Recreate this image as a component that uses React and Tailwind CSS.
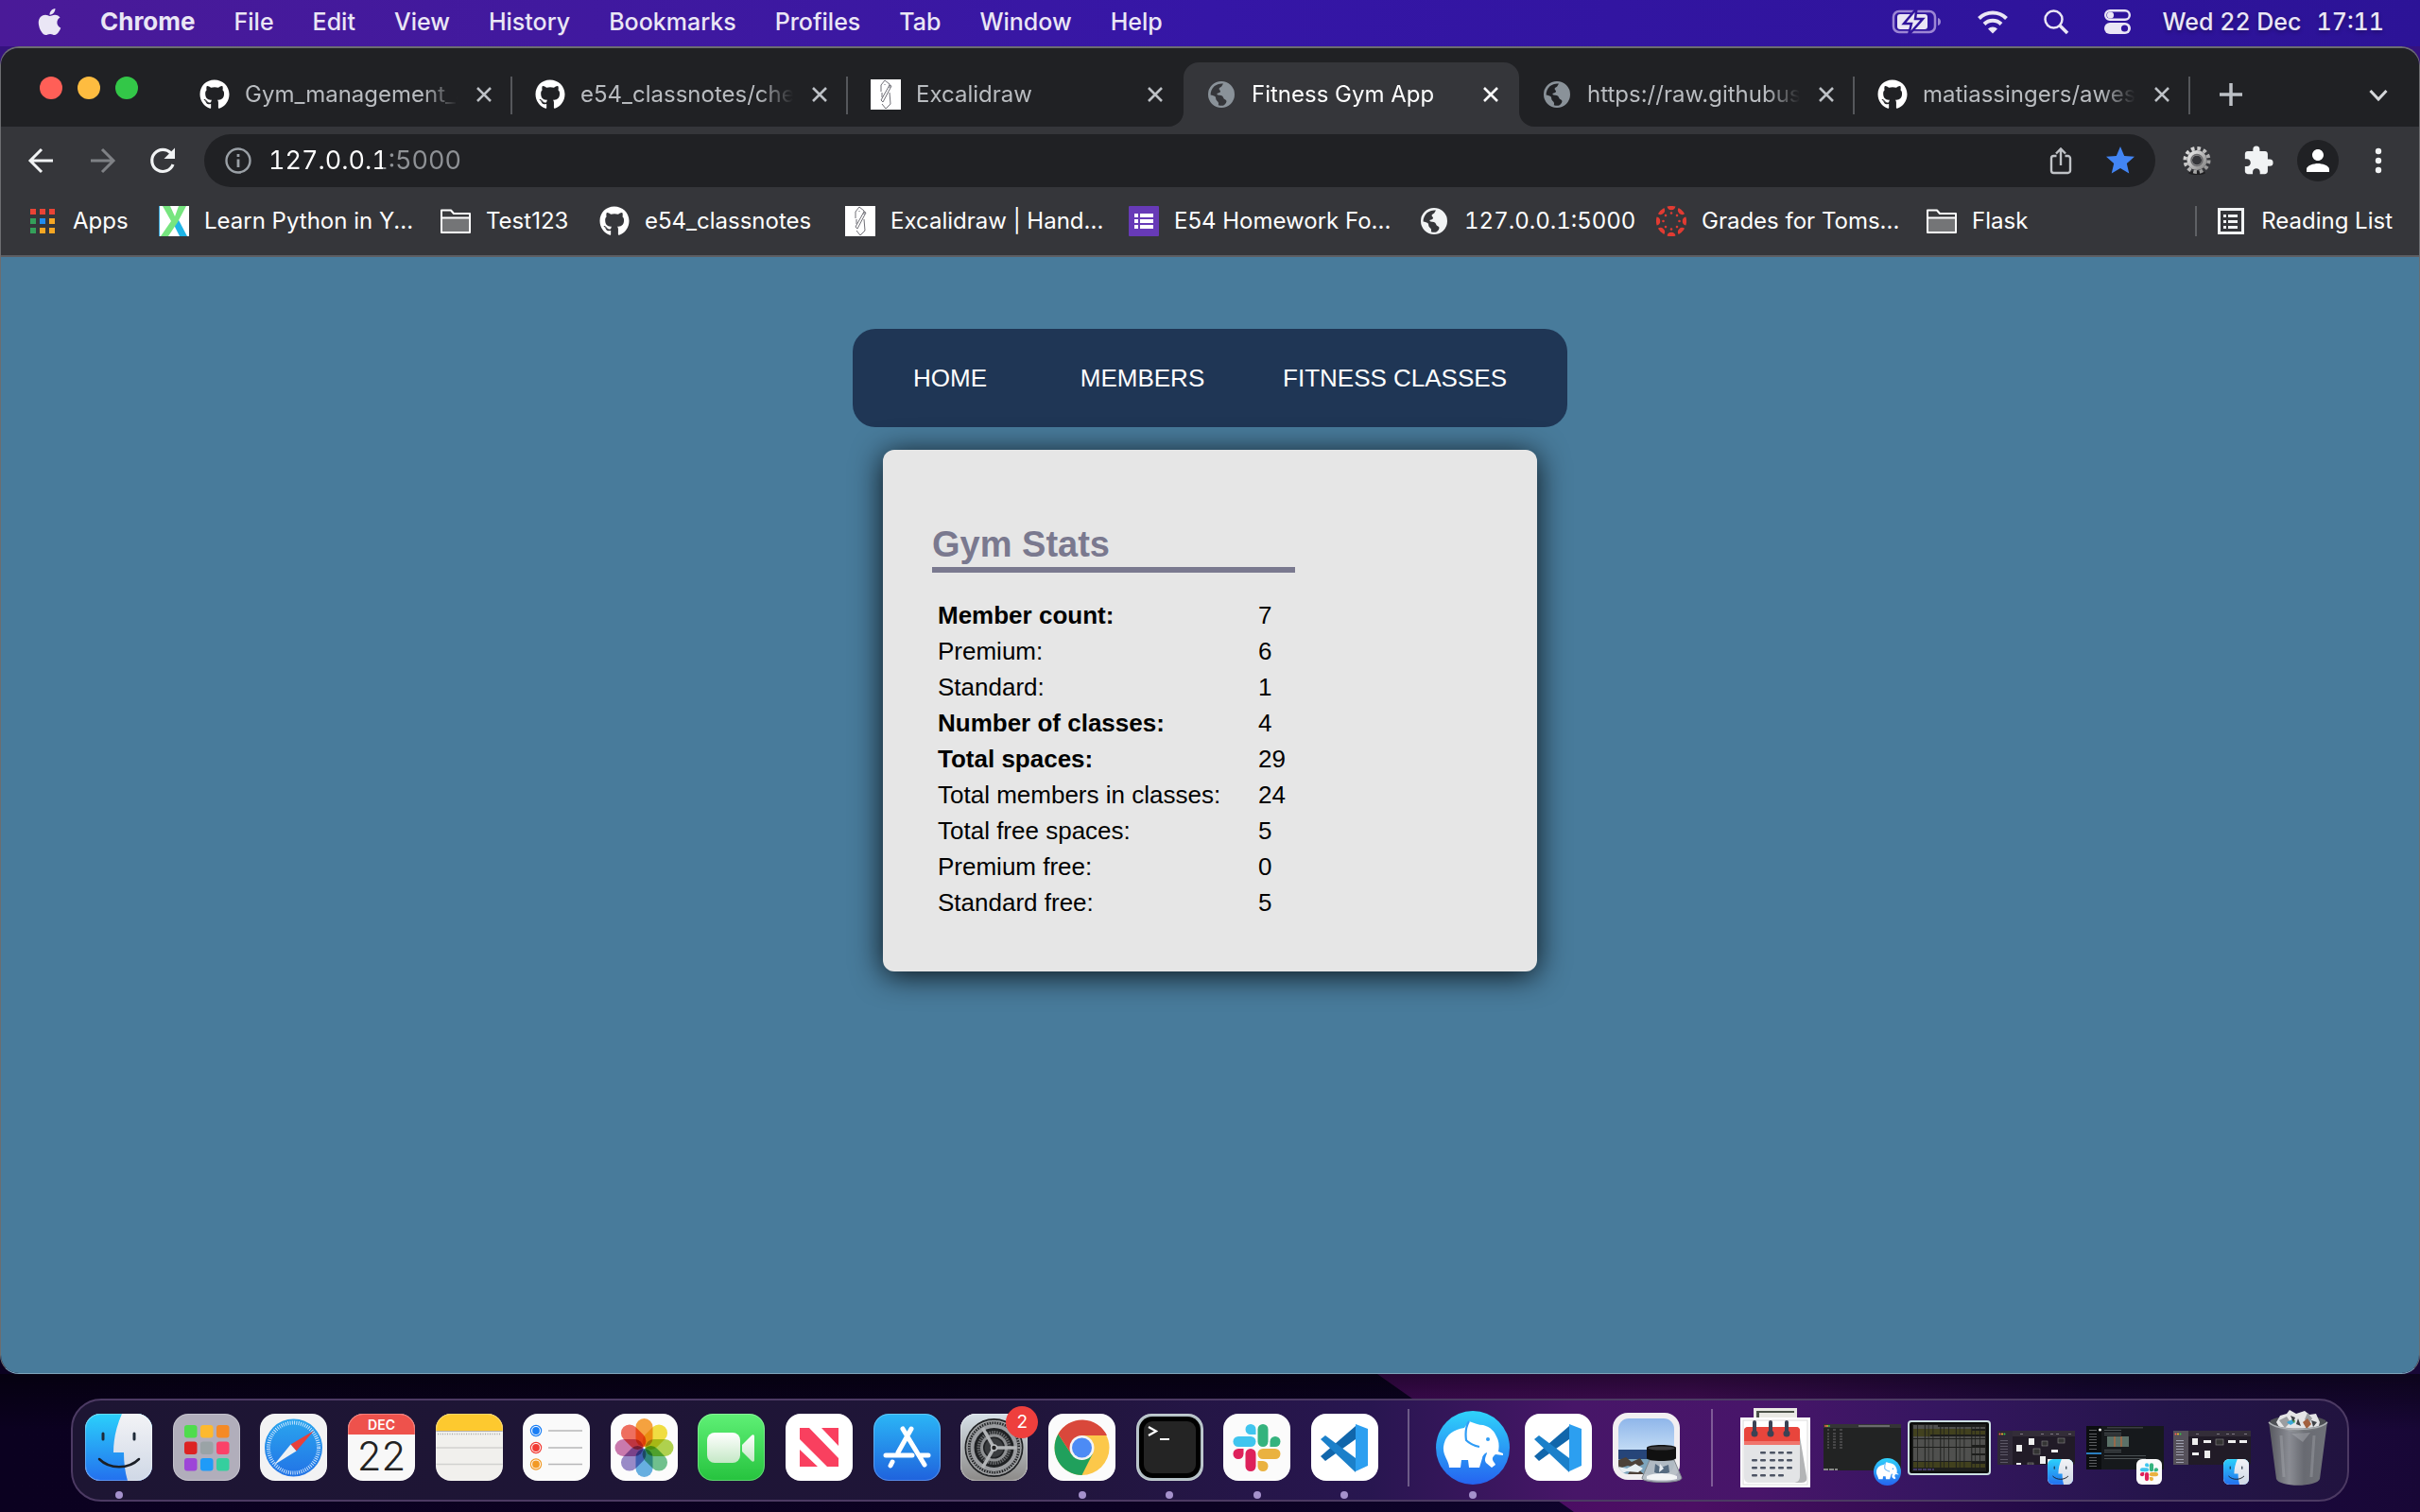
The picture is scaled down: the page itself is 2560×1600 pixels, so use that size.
import React from "react";
import { FaApple, FaGithub } from "react-icons/fa";
import { MdStar, MdExtension, MdPerson } from "react-icons/md";

const INTER = "font-['Inter','Noto_Sans',sans-serif]";
const ARIAL = "font-['Liberation_Sans',Arial,sans-serif]";

/* ---------- small glyphs ---------- */

function Globe({ className }) {
  return (
    <svg viewBox="0 0 32 32" className={"w-8 h-8 shrink-0 " + className} aria-hidden="true">
      <path
        fill="currentColor"
        fillRule="evenodd"
        d="M16 2a14 14 0 1 0 0 28a14 14 0 0 0 0-28zM18 4.6c-1 1.200-1 2.600-2.400 3.400c-2.200 1-2.600 2-1.200 3.600c1.400 1.400.2 2.600-1.600 2.800c-1.800.2-1.800 1.600-.4 2c2.400.2 5 .4 5.600 2.600c.4 2.200 2.200 2 3.200 3.200c.8 1.600-.4 3.600-2.800 5.400a11.600 11.600 0 0 1-5.600-.4c.6-2 .2-3.200-1.400-4.400c-1.400-1-1-2.800-1.600-4.200c-1-1.600-3.400-1.800-5.200-2.200A11.600 11.600 0 0 1 18 4.600z"
      />
    </svg>
  );
}

function PencilMark() {
  return (
    <svg viewBox="0 0 32 32" className="w-8 h-8 shrink-0" aria-hidden="true">
      <rect width="32" height="32" fill="#fff" />
      <g fill="none" stroke="#6f6f76" strokeWidth="1" strokeLinejoin="round">
        <path d="M11 13V6l4-5 5 4v4" />
        <path d="M20 6l2 1-9 17-2-2z" />
        <path d="M12 14v5M20 14l1 12-5 5-4-5M15 5v1" />
      </g>
    </svg>
  );
}

function AppsGrid() {
  const c = ["#ea4335", "#ea4335", "#ea4335", "#34a05a", "#1f8cf0", "#f5a623", "#34a05a", "#f5a623", "#f5a623"];
  return (
    <svg viewBox="0 0 32 32" className="w-8 h-8 shrink-0" aria-hidden="true">
      {c.map((f, i) => (
        <rect key={i} x={3 + (i % 3) * 10} y={3 + Math.floor(i / 3) * 10} width="6" height="6" fill={f} />
      ))}
    </svg>
  );
}

function LearnX() {
  return (
    <svg viewBox="0 0 32 32" className="w-8 h-8 shrink-0" aria-hidden="true">
      <rect width="32" height="32" fill="#fff" />
      <path d="M0 0h1v32H0z" fill="#3aa7d8" />
      <path d="M14 16l6-3 10 19h-8z" fill="#1eb4e6" />
      <path d="M4 0h8l5 11L21 0h8L20 17 10 32H2l11-16z" fill="#77e57f" />
    </svg>
  );
}

function Folder() {
  return (
    <svg viewBox="0 0 32 32" className="w-8 h-8 shrink-0" aria-hidden="true">
      <path d="M1 28V4.500h10l3 3.500h17v20z" fill="#3a3b3e" stroke="#fff" strokeWidth="2" strokeLinejoin="round" />
      <path d="M2 13h28v14H2z" fill="#747577" />
      <path d="M1 12.500h30" stroke="#fff" strokeWidth="2" />
    </svg>
  );
}

function FormsIcon() {
  return (
    <svg viewBox="0 0 32 32" className="w-8 h-8 shrink-0" aria-hidden="true">
      <rect width="32" height="32" rx="1" fill="#673ab7" />
      {[8, 14, 20].map((y) => (
        <g key={y} fill="#fff">
          <rect x="6" y={y} width="4" height="4" />
          <rect x="12" y={y} width="14" height="4" />
        </g>
      ))}
    </svg>
  );
}

function CanvasIcon() {
  const a = [0, 45, 90, 135, 180, 225, 270, 315];
  return (
    <svg viewBox="0 0 32 32" className="w-8 h-8 shrink-0" aria-hidden="true">
      {a.map((r) => (
        <g key={r} transform={`rotate(${r} 16 16)`} fill="#e13b32">
          <path d="M11.500 .6a16 16 0 0 1 9 0a4.600 4.600 0 0 1-9 0z" />
          <circle cx="16" cy="7.500" r="1.300" />
        </g>
      ))}
    </svg>
  );
}

function ReadingIcon() {
  return (
    <svg viewBox="0 0 32 32" className="w-8 h-8 shrink-0" aria-hidden="true">
      <rect x="3.500" y="3.500" width="25" height="25" fill="none" stroke="#f1f3f4" strokeWidth="3" />
      {[9, 15, 21].map((y) => (
        <g key={y} fill="#f1f3f4">
          <rect x="8" y={y} width="3" height="3" />
          <rect x="13" y={y} width="10" height="3" />
        </g>
      ))}
    </svg>
  );
}

function Close({ active }) {
  return (
    <svg viewBox="0 0 16 16" className={active ? "w-4 h-4 text-white" : "w-4 h-4 text-[#bdc1c6]"} aria-hidden="true">
      <path d="M1 1l14 14M15 1L1 15" stroke="currentColor" strokeWidth="2.600" fill="none" />
    </svg>
  );
}

/* ---------- menu bar ---------- */

function MenuBar() {
  const items = ["File", "Edit", "View", "History", "Bookmarks", "Profiles", "Tab", "Window", "Help"];
  return (
    <header
      className={
        "relative flex h-[49px] items-center bg-linear-to-r from-[#4a1a98] via-[#3516a6] to-[#2c1397] pb-[3px] pl-[38px] pr-[38px] text-[25px] font-medium leading-8 text-[#eae6f5] [text-shadow:0_2px_4px_rgba(0,0,0,0.3)] " +
        INTER
      }
    >
      <button aria-label="Apple menu" className="mr-[39px]">
        <FaApple className="h-8 w-[29px]" />
      </button>
      <nav className="flex gap-[41px]">
        <button className="text-[26px] font-bold">Chrome</button>
        {items.map((t) => (
          <button key={t}>{t}</button>
        ))}
      </nav>
      <div className="ml-auto flex items-center">
        <svg viewBox="0 0 54 28" className="mr-9 h-7 w-[54px]" aria-label="Battery charging">
          <rect x="2" y="3" width="44" height="22" rx="6" fill="none" stroke="#9c86d4" strokeWidth="2.500" />
          <path d="M49 10c4 1 4 7 0 8z" fill="#9c86d4" />
          <rect x="6" y="6" width="32" height="16" rx="3" fill="#eae6f5" />
          <path d="M26.500 0L13 16h8l-3 12L33 11h-8z" fill="#eae6f5" stroke="#30149c" strokeWidth="2.500" />
        </svg>
        <svg viewBox="0 0 34 26" className="mr-9 h-[26px] w-[34px]" aria-label="Wi-Fi">
          <g fill="none" stroke="#eae6f5" strokeWidth="4">
            <path d="M2.500 9.500a20.500 20.500 0 0 1 29 0" />
            <path d="M8 15.500a12.800 12.800 0 0 1 18 0" />
          </g>
          <path d="M17 25.500l-5-5a7 7 0 0 1 10 0z" fill="#eae6f5" />
        </svg>
        <svg viewBox="0 0 28 28" className="mr-9 h-7 w-7" aria-label="Search">
          <circle cx="11.500" cy="11.500" r="9" fill="none" stroke="#eae6f5" strokeWidth="2.500" />
          <path d="M18 18l8 8" stroke="#eae6f5" strokeWidth="3.500" />
        </svg>
        <svg viewBox="0 0 30 28" className="mr-[33px] h-7 w-[30px]" aria-label="Control Centre">
          <rect x="2.200" y="2.200" width="25.600" height="9.600" rx="4.800" fill="none" stroke="#eae6f5" strokeWidth="2.400" />
          <circle cx="7.500" cy="7" r="3.600" fill="#eae6f5" />
          <rect x="1" y="15" width="28" height="12" rx="6" fill="#eae6f5" />
          <circle cx="22.500" cy="21" r="3.600" fill="#30149c" />
        </svg>
        <time className="flex gap-4 tabular-nums">
          <span>Wed 22 Dec</span>
          <span>17:11</span>
        </time>
      </div>
    </header>
  );
}

/* ---------- browser chrome ---------- */

const tabs = [
  { title: "Gym_management_app", icon: "gh", sep: true },
  { title: "e54_classnotes/checkin", icon: "gh", sep: true },
  { title: "Excalidraw", icon: "pencil" },
  { title: "Fitness Gym App", icon: "globe", active: true },
  { title: "https://raw.githubusercontent", icon: "globe", sep: true },
  { title: "matiassingers/awesome", icon: "gh", sep: true },
];

function Tab({ title, icon, active, sep }) {
  return (
    <div
      role="tab"
      aria-selected={!!active}
      className={
        "relative flex h-[68px] w-[355px] items-center pl-6 pr-[22px] " +
        (active ? "rounded-t-2xl bg-[#35363a] text-white" : "text-[#b9bcc0]")
      }
    >
      {active && (
        <>
          <svg viewBox="0 0 16 16" className="absolute -left-4 bottom-0 h-4 w-4" aria-hidden="true">
            <path d="M16 0v16H0A16 16 0 0 0 16 0z" fill="#35363a" />
          </svg>
          <svg viewBox="0 0 16 16" className="absolute -right-4 bottom-0 h-4 w-4" aria-hidden="true">
            <path d="M0 0v16h16A16 16 0 0 1 0 0z" fill="#35363a" />
          </svg>
        </>
      )}
      {icon === "gh" && <FaGithub className="h-8 w-8 shrink-0 text-white" />}
      {icon === "pencil" && <PencilMark />}
      {icon === "globe" && <Globe className="text-[#8a9299]" />}
      <button className="ml-4 mr-5 min-w-0 flex-1 overflow-hidden whitespace-nowrap text-left [mask-image:linear-gradient(to_right,black_84%,transparent_100%)]">
        {title}
      </button>
      <button aria-label={"Close " + title}>
        <Close active={active} />
      </button>
      {sep && <span className="absolute right-0 top-[15px] h-10 w-0.5 bg-[#55575b]" />}
    </div>
  );
}

function TabStrip() {
  return (
    <div className="flex h-[83px] items-end bg-[#202124] pl-[41px]">
      <div className="flex h-full items-center gap-4">
        <button aria-label="Close window" className="h-6 w-6 rounded-full bg-[#ff5f57]" />
        <button aria-label="Minimise window" className="h-6 w-6 rounded-full bg-[#febc40]" />
        <button aria-label="Zoom window" className="h-6 w-6 rounded-full bg-[#33c748]" />
      </div>
      <div role="tablist" className="ml-[41px] flex">
        {tabs.map((t) => (
          <Tab key={t.title} {...t} />
        ))}
      </div>
      <button aria-label="New tab" className="mb-[22px] ml-[31px]">
        <svg viewBox="0 0 24 24" className="h-6 w-6">
          <path d="M12 0v24M0 12h24" stroke="#bdc1c6" strokeWidth="3.500" />
        </svg>
      </button>
      <button aria-label="Search tabs" className="mb-[26px] ml-auto mr-[33px]">
        <svg viewBox="0 0 20 14" className="h-3.5 w-5">
          <path d="M1.500 2L10 11l8.500-9" stroke="#d5d7da" strokeWidth="3" fill="none" />
        </svg>
      </button>
    </div>
  );
}

function Toolbar() {
  return (
    <div className="flex items-center bg-[#35363a] pl-[27px] pr-[27px] pt-2">
      <button aria-label="Back" className="mr-8">
        <svg viewBox="0 0 32 32" className="h-8 w-8">
          <path d="M28 16H5M16 4L4 16l12 12" stroke="#f1f3f4" strokeWidth="3" fill="none" />
        </svg>
      </button>
      <button aria-label="Forward" className="mr-8">
        <svg viewBox="0 0 32 32" className="h-8 w-8">
          <path d="M4 16h23M16 4l12 12-12 12" stroke="#7f8185" strokeWidth="3" fill="none" />
        </svg>
      </button>
      <button aria-label="Reload">
        <svg viewBox="0 0 32 32" className="h-8 w-8">
          <path d="M25 8.500A11.500 11.500 0 1 0 27 20" stroke="#f1f3f4" strokeWidth="3.200" fill="none" />
          <path d="M29 2.500V14H17.500z" fill="#f1f3f4" />
        </svg>
      </button>
      <div className="ml-7 flex h-14 flex-1 items-center rounded-full bg-[#202124] pl-5 pr-[19px]">
        <svg viewBox="0 0 32 32" className="h-8 w-8 shrink-0" aria-hidden="true">
          <circle cx="16" cy="16" r="12.500" fill="none" stroke="#9aa0a6" strokeWidth="2.400" />
          <path d="M16 14.500V23M16 9v3" stroke="#9aa0a6" strokeWidth="2.800" />
        </svg>
        <input
          aria-label="Address"
          defaultValue="127.0.0.1:5000"
          className="ml-4 min-w-0 flex-1 bg-[linear-gradient(to_right,#fff_121px,#8f9296_121px)] bg-clip-text text-[27px] leading-9 text-transparent tabular-nums outline-none"
        />
        <button aria-label="Share" className="mr-[29px]">
          <svg viewBox="0 0 32 32" className="h-8 w-8">
            <path
              d="M11.500 11H8.500a2.500 2.500 0 0 0-2.500 2.500v13A2.500 2.500 0 0 0 8.500 29h15a2.500 2.500 0 0 0 2.500-2.500v-13a2.500 2.500 0 0 0-2.500-2.500h-3M16 21V3.500M11 8.500l5-5 5 5"
              stroke="#bfc2c6"
              strokeWidth="2.400"
              fill="none"
            />
          </svg>
        </button>
        <button aria-label="Bookmark this tab">
          <MdStar className="h-9 w-9 text-[#4285f4]" />
        </button>
      </div>
      <button aria-label="Extension settings" className="ml-7 mr-8">
        <svg viewBox="0 0 32 32" className="h-8 w-8">
          <defs>
            <linearGradient id="cog" x1="0" x2="1" y1="0" y2="1">
              <stop offset="0" stopColor="#e4e4e4" />
              <stop offset="1" stopColor="#8b8b8b" />
            </linearGradient>
          </defs>
          <ellipse cx="16" cy="29" rx="9" ry="2" fill="#1e1e20" />
          <circle cx="16" cy="15.500" r="12.500" fill="none" stroke="url(#cog)" strokeWidth="4" strokeDasharray="3.600 2.945" />
          <circle cx="16" cy="15.500" r="7.800" fill="none" stroke="url(#cog)" strokeWidth="5.500" />
          <circle cx="16" cy="15.500" r="6" fill="none" stroke="#6b6b6d" strokeWidth="1.600" />
        </svg>
      </button>
      <button aria-label="Extensions" className="mr-6">
        <MdExtension className="h-[34px] w-[34px] text-[#f1f3f4]" />
      </button>
      <button aria-label="Profile" className="flex h-11 w-11 items-center justify-center rounded-full bg-[#202124]">
        <MdPerson className="h-9 w-9 text-white" />
      </button>
      <button aria-label="Menu" className="ml-[26px]">
        <svg viewBox="0 0 32 32" className="h-8 w-8">
          {[6, 16, 26].map((y) => (
            <circle key={y} cx="16" cy={y} r="3.200" fill="#f1f3f4" />
          ))}
        </svg>
      </button>
    </div>
  );
}

function Bookmark({ icon, children, className = "" }) {
  return (
    <a href="#" className={"flex shrink-0 items-center gap-4 whitespace-nowrap " + className}>
      {icon}
      {children}
    </a>
  );
}

function BookmarksBar() {
  return (
    <div className="flex h-[74px] items-center border-b-2 border-[#5d5e62] bg-[#35363a] pl-7 pr-7 text-white">
      <Bookmark className="w-[139px]" icon={<AppsGrid />}>Apps</Bookmark>
      <Bookmark className="w-[298px]" icon={<LearnX />}>Learn Python in Y...</Bookmark>
      <Bookmark className="w-[168px]" icon={<Folder />}>Test123</Bookmark>
      <Bookmark className="w-[260px]" icon={<FaGithub className="h-8 w-8" />}>e54_classnotes</Bookmark>
      <Bookmark className="w-[300px]" icon={<PencilMark />}>Excalidraw | Hand...</Bookmark>
      <Bookmark className="w-[307px]" icon={<FormsIcon />}>E54 Homework Fo...</Bookmark>
      <Bookmark className="w-[251px] tabular-nums" icon={<Globe className="text-[#f1f3f4]" />}>127.0.0.1:5000</Bookmark>
      <Bookmark className="w-[286px]" icon={<CanvasIcon />}>Grades for Toms...</Bookmark>
      <Bookmark icon={<Folder />}>Flask</Bookmark>
      <span className="ml-auto mr-5 h-8 w-0.5 bg-[#5f6165]" />
      <Bookmark icon={<ReadingIcon />}>Reading List</Bookmark>
    </div>
  );
}

/* ---------- page ---------- */

const stats = [
  ["Member count:", 7, true],
  ["Premium:", 6],
  ["Standard:", 1],
  ["Number of classes:", 4, true],
  ["Total spaces:", 29, true],
  ["Total members in classes:", 24],
  ["Total free spaces:", 5],
  ["Premium free:", 0],
  ["Standard free:", 5],
];

function Page() {
  return (
    <main className={"flex-1 bg-[#487b9b] pt-[76px] text-[26px] " + ARIAL}>
      <nav className="mx-auto flex h-[104px] w-[756px] items-center justify-between rounded-3xl bg-[#1f3655] px-16 text-white">
        <a href="#">HOME</a>
        <a href="#" className="ml-4">MEMBERS</a>
        <a href="#">FITNESS CLASSES</a>
      </nav>
      <section className="mx-auto mt-6 h-[552px] w-[692px] rounded-xl bg-[#e6e6e6] px-[52px] pt-[76px] text-black shadow-[0_4px_32px_rgba(0,0,0,0.85)]">
        <h1 className="w-96 border-b-[6px] border-[#7a798f] text-[38px] font-bold leading-[48px] text-[#7a798f]">Gym Stats</h1>
        <table className="mt-[26px] leading-[38px]">
          <tbody>
            {stats.map(([label, value, bold]) => (
              <tr key={label}>
                <th scope="row" className={"w-[345px] py-0 pl-1.5 text-left " + (bold ? "font-bold" : "font-normal")}>
                  {label}
                </th>
                <td className="p-0">{value}</td>
              </tr>
            ))}
          </tbody>
        </table>
      </section>
    </main>
  );
}

/* ---------- dock artwork ---------- */

function Tile({ children, fill = "#fff", name }) {
  return (
    <svg viewBox="0 0 71 71" className="h-[71px] w-[71px]" aria-hidden="true">
      <defs>
        <clipPath id={"clip-" + name}>
          <rect width="71" height="71" rx="16" />
        </clipPath>
      </defs>
      <g clipPath={`url(#clip-${name})`}>
        <rect width="71" height="71" fill={fill} />
        {children}
      </g>
      <rect x=".5" y=".5" width="70" height="70" rx="15.500" fill="none" stroke="#fff" strokeOpacity=".25" />
    </svg>
  );
}

function Grad({ id, a, b }) {
  return (
    <linearGradient id={id} x1="0" x2="0" y1="0" y2="1">
      <stop offset="0" stopColor={a} />
      <stop offset="1" stopColor={b} />
    </linearGradient>
  );
}

function FinderArt() {
  return (
    <>
      <defs>
        <Grad id="fb" a="#2bd0fb" b="#2370ee" />
        <Grad id="fw" a="#f3f3f6" b="#cfd8e6" />
      </defs>
      <rect width="71" height="71" fill="url(#fb)" />
      <path d="M39 0C33 14 30 27 30 41h11c0 10 1 20 4 30h26V0z" fill="url(#fw)" />
      <path d="M19 21v6M52 21v6" stroke="#1e2a38" strokeWidth="3" strokeLinecap="round" />
      <path d="M15 48c11 11 31 11 42 0" stroke="#1b1f26" strokeWidth="2.500" fill="none" strokeLinecap="round" />
    </>
  );
}

function SlackArt() {
  return (
    <g>
      <g fill="#40c5ef">
        <path d="M29 22V16.500a5.500 5.500 0 1 0-5.500 5.500z" />
        <rect x="5" y="24" width="24" height="11" rx="5.500" />
      </g>
      <g fill="#35b37e">
        <rect x="31" y="11" width="11" height="24" rx="5.500" />
        <path d="M44 35h5.500a5.500 5.500 0 1 0-5.500-5.500z" />
      </g>
      <g fill="#eab240">
        <rect x="31" y="37" width="24" height="11" rx="5.500" />
        <path d="M31 50v5.500a5.500 5.500 0 1 0 5.500-5.500z" />
      </g>
      <g fill="#de215b">
        <path d="M16 37h-5.500a5.500 5.500 0 1 0 5.500 5.500z" />
        <rect x="18" y="37" width="11" height="24" rx="5.500" />
      </g>
    </g>
  );
}

function SlackTile({ name }) {
  return (
    <Tile name={name} fill="#fbfbfb">
      <g transform="translate(5.500 0)">
        <SlackArt />
      </g>
    </Tile>
  );
}

function CodeTile({ name }) {
  return (
    <Tile name={name}>
      <path d="M47 13L10 45l5 5 32-23z" fill="#1166ab" />
      <path d="M10 27l5-4 32 24v15z" fill="#1b80ca" />
      <path d="M47 11l13 5v39l-13 6z" fill="#2c9ff0" />
    </Tile>
  );
}

function ElephantArt() {
  return (
    <>
      <defs>
        <Grad id="el" a="#2fd3fb" b="#2563f0" />
      </defs>
      <circle cx="39" cy="39" r="39" fill="url(#el)" />
      <path
        d="M35 11c6 2 10 4 15 4c8 2 12 7 14 12c3 5 3 11 2 16l5 2v2l-8-1c-4 3-4 6-1 9l1 2-4 3-6-5c-3-4 1-8 1-11c-3 1-5 4-5 6l-3 10H35l-1-8h-7l-1 8H14C14 53 7 47 8 38c1-10 8-18 22-20z"
        fill="#fff"
      />
      <path d="M35 11c-3 5-4 13-3 20c3 3 9 6 14 7" stroke="#2f9cf6" strokeWidth="2.200" fill="none" />
      <circle cx="55" cy="30" r="2" fill="#2f9cf6" />
    </>
  );
}

function ChromeArt() {
  return (
    <g transform="translate(35.500 36)">
      <circle r="29" fill="#fcc84a" />
      <path d="M-25.100-14.500A29 29 0 0 0 0 29L11.300 6.500-11.300 6.500z" fill="#20a05c" />
      <path d="M-25.100-14.500A29 29 0 0 1 26.500-13H0L-11.300 6.500z" fill="#d9483b" />
      <circle r="13" fill="#f4f4f4" />
      <circle r="10.500" fill="#4c8bf5" />
    </g>
  );
}

function SettingsArt() {
  return (
    <>
      <defs>
        <Grad id="stg" a="#d6e0e8" b="#8c8a88" />
      </defs>
      <rect width="71" height="71" fill="url(#stg)" />
      <g transform="translate(35.500 36)" fill="none">
        <circle r="31" fill="#1f2123" />
        <circle r="28.500" stroke="#a7a9ab" strokeWidth="1.500" />
        <circle r="27" stroke="#8f9193" strokeWidth="4" strokeDasharray="1.400 1.400" />
        <circle r="23" stroke="#9b9da0" strokeWidth="4" />
        <circle r="16" stroke="#66686a" strokeWidth="4" strokeDasharray="1.500 1" />
        <circle r="13" stroke="#8f9193" strokeWidth="3" />
        <circle r="10" fill="#3a3c3e" />
        {[60, 180, 300].map((r) => (
          <path key={r} d="M0 0H24" transform={`rotate(${r - 60 + 0})`} stroke="#b2b4b6" strokeWidth="3.500" />
        ))}
        <circle r="3" fill="#222" stroke="#c0c2c4" strokeWidth="1.500" />
      </g>
    </>
  );
}

function LaunchpadArt() {
  const c = ["#4fdc4d", "#fdb92e", "#f58a26", "#dd2222", "#9aa3a6", "#fb4168", "#9d45d8", "#1f9bf8", "#35cf9e"];
  return c.map((f, i) => (
    <rect key={i} x={12 + (i % 3) * 17} y={12 + Math.floor(i / 3) * 17.5} width="13.500" height="13.500" rx="3" fill={f} />
  ));
}

function SafariArt() {
  return (
    <>
      <defs>
        <Grad id="sfb" a="#2aa5ee" b="#2273e6" />
      </defs>
      <circle cx="35.500" cy="36" r="30.500" fill="url(#sfb)" />
      <circle cx="35.500" cy="36" r="26.500" fill="none" stroke="#d8ecff" strokeWidth="4" strokeDasharray=".9 1.410" />
      <path d="M57 18L32.500 32.500l6 7z" fill="#e8403a" />
      <path d="M15 54l17.500-21.500 6 7z" fill="#eef1f4" />
    </>
  );
}

function PhotosArt() {
  const c = ["#f79a2b", "#f2dd2f", "#a8cf3c", "#62bd83", "#58a9e0", "#8f7fc4", "#c66ba6", "#f0604f"];
  return c.map((f, i) => (
    <rect
      key={i}
      x="26.500"
      y="5"
      width="18"
      height="30"
      rx="9"
      fill={f}
      fillOpacity=".9"
      className="mix-blend-multiply"
      transform={`rotate(${i * 45} 35.500 36)`}
    />
  ));
}

function DockItem({ label, running, children, className = "" }) {
  return (
    <div className={"relative flex shrink-0 flex-col items-center " + className}>
      <button aria-label={label}>{children}</button>
      {running && <span className="absolute -bottom-[19px] h-2 w-2 rounded-full bg-[#a591cc]" />}
    </div>
  );
}

function MiniFinder({ name }) {
  return (
    <span className="absolute -bottom-[21px] right-0.5 block h-[27px] w-[27px] [&>svg]:h-full [&>svg]:w-full">
      <Tile name={name}>
        <FinderArt />
      </Tile>
    </span>
  );
}

function FinderWindow({ light, files }) {
  return (
    <svg viewBox="0 0 82 36" className="h-9 w-[82px]" aria-hidden="true">
      <rect width="82" height="36" rx="2" fill="#211b27" />
      <rect width="16" height="36" fill={light ? "#55505a" : "#2f2937"} />
      <rect x="16" width="66" height="6" fill="#332d38" />
      <circle cx="2.500" cy="3.500" r="1" fill="#ff5f57" />
      <circle cx="5" cy="3.500" r="1" fill="#febc2e" />
      <circle cx="7.500" cy="3.500" r="1" fill="#33c748" />
      {[10, 13, 16, 19, 22, 25, 30, 33].map((y) => (
        <rect key={y} x="3" y={y} width="8" height="1" fill={light ? "#9fa0b0" : "#5c5766"} />
      ))}
      {[24, 46, 56, 62, 75].map((x) => (
        <rect key={x} x={x} y="3" width="3" height="1" fill="#7d7883" />
      ))}
      {files.map(([x, y, w, h, f], i) => (
        <rect key={i} x={x} y={y} width={w} height={h} fill={f || "#eee"} stroke={f ? "#888" : "none"} strokeWidth=".6" />
      ))}
    </svg>
  );
}

function Trash() {
  return (
    <svg viewBox="0 0 64 82" className="h-[82px] w-16" aria-hidden="true">
      <defs>
        <linearGradient id="tr" x1="0" x2="1" y1="0" y2="0">
          <stop offset="0" stopColor="#595b60" />
          <stop offset=".35" stopColor="#909398" />
          <stop offset=".6" stopColor="#6c6f74" />
          <stop offset="1" stopColor="#74777c" />
        </linearGradient>
      </defs>
      <ellipse cx="32" cy="14" rx="30" ry="7" fill="#4d4f54" />
      <path d="M9 14l4-7 7-2 3-4 7 4 9-3 5 4 7-1 4 9-2 7-20 5-20-5z" fill="#e4e4e6" />
      <path d="M12 12l8-4 4 6-6 6zM42 4l5 6-4 6-4-5z" fill="#9b9da0" />
      <path d="M20 14l6-3 3 3-5 3z" fill="#3ba7d8" />
      <path d="M25 11l4 1-1 3z" fill="#57b64a" />
      <path d="M37 14l5-4 4 6-5 5z" fill="#a2603f" />
      <path d="M24 7l5 2-2 5zM46 12l6 2-4 5zM32 10l3 8-5-2z" fill="#3f4247" />
      <path d="M1 13c8 10 54 10 62 0L55 74c-3 9-43 9-46 0z" fill="url(#tr)" fillOpacity=".95" />
      <path d="M1 14c8 10 54 10 62 0" fill="none" stroke="#aeb1b5" strokeWidth="1.500" />
      <path d="M14 28l3 44M49 28l-3 44" stroke="#c4c6ca" strokeOpacity=".25" strokeWidth="3" />
      <path d="M25 26l12 9 8-10z" fill="#b4b7bb" fillOpacity=".4" />
    </svg>
  );
}

function CalendarStack() {
  return (
    <svg viewBox="0 0 74 84" className="h-[84px] w-[74px]" aria-hidden="true">
      <rect x="14" width="46" height="12" fill="#e9e9e4" />
      <path d="M17 3h40v2H20v5h-3z" fill="#4b5248" />
      <rect y="10" width="74" height="74" fill="#fff" />
      <rect x="3" y="13" width="68" height="68" fill="#fff" stroke="#dcdcdc" />
      <path d="M63 30l7 42c1 5-1 7-5 7H55z" fill="#b3b4b6" />
      <path d="M4 36h59v36c0 5-3 7-7 7H10c-4 0-6-2-6-6z" fill="#e3e4e6" />
      <path d="M4 39V24c0-3 2-4 4-4h51c3 0 4 2 4 4v15z" fill="#f0746c" />
      <path d="M4 35V24c0-3 2-4 4-4h51c3 0 4 2 4 4v11z" fill="#e8453c" />
      {[15, 32, 49].map((x) => (
        <g key={x}>
          <path d={`M${x} 15v12`} stroke="#3b4254" strokeWidth="4" strokeLinecap="round" />
          <circle cx={x} cy="27" r="3.500" fill="#3b4254" />
        </g>
      ))}
      {[46, 54, 62, 70].map((y, r) =>
        [12, 21, 31, 40, 49].map((x, c) =>
          (r === 0 && c === 0) || (r === 3 && c === 4) ? null : (
            <rect key={x + "-" + y} x={x} y={y} width="6" height="2.500" rx="1" fill="#4d5464" />
          )
        )
      )}
    </svg>
  );
}

function Dock() {
  return (
    <footer className="relative mx-[75px] mb-[11px] mt-[26px] flex h-[109px] items-center rounded-[32px] border-2 border-[#4c3a63] bg-[linear-gradient(to_right,#1d1533_0%,#1f1538_40%,#281650_57%,#471668_66%,#48156a_74%,#351660_82%,#24154a_92%,#21133f_100%)] pb-[6px] pl-[13px] pr-5">
      <div className="flex flex-1 justify-between">
        <DockItem label="Finder" running><Tile name="finder"><FinderArt /></Tile></DockItem>
        <DockItem label="Launchpad"><Tile name="launch" fill="#b1aebb"><LaunchpadArt /></Tile></DockItem>
        <DockItem label="Safari"><Tile name="safari" fill="#f2f2f3"><SafariArt /></Tile></DockItem>
        <DockItem label="Calendar">
          <Tile name="cal" fill="#f8f8f8">
            <rect width="71" height="22" fill="#ee524c" />
            <text x="35.500" y="17" textAnchor="middle" fill="#fff" fontSize="14" fontWeight="600" fontFamily="Inter, sans-serif">DEC</text>
            <text x="35.500" y="60" textAnchor="middle" fill="#222" fontSize="42" fontWeight="300" fontFamily="Inter, sans-serif">22</text>
          </Tile>
        </DockItem>
        <DockItem label="Notes">
          <Tile name="notes" fill="#f1f0ed">
            <rect width="71" height="18" fill="#fdc92f" />
            <path d="M0 18.500h71" stroke="#b5b0a8" />
            <path d="M2 21.500h67" stroke="#a8a8a8" strokeWidth="1.500" strokeDasharray="1 1.500" />
            <path d="M0 36h71M0 53.500h71" stroke="#d2d1d0" strokeWidth="1.500" />
          </Tile>
        </DockItem>
        <DockItem label="Reminders">
          <Tile name="rem" fill="#fafafa">
            {[["#1a7ef5", 18], ["#f13b34", 36], ["#f29a26", 53.5]].map(([f, y]) => (
              <g key={f}>
                <circle cx="14" cy={y} r="5.600" fill="#fff" stroke={f} strokeWidth="1.200" />
                <circle cx="14" cy={y} r="3.900" fill={f} />
                <path d={`M27 ${y}h36`} stroke="#b7b7b9" strokeWidth="1.500" />
              </g>
            ))}
          </Tile>
        </DockItem>
        <DockItem label="Photos"><Tile name="photos" fill="#fcfcfc"><PhotosArt /></Tile></DockItem>
        <DockItem label="FaceTime">
          <Tile name="ft" fill="url(#ftg)">
            <defs>
              <Grad id="ftg" a="#5ff076" b="#26c33e" />
              <Grad id="ftc" a="#ffffff" b="#c5e8c6" />
            </defs>
            <rect x="10" y="20" width="35" height="32" rx="8" fill="url(#ftc)" />
            <path d="M47 33l10-10c1-1 3-1 3 1v25c0 2-2 2-3 1L47 40z" fill="url(#ftc)" />
          </Tile>
        </DockItem>
        <DockItem label="News">
          <Tile name="news">
            <path d="M15 15h10l31 32v9H44L15 27zM38 15h18v19zM15 38v18h19z" fill="#f9405f" />
          </Tile>
        </DockItem>
        <DockItem label="App Store">
          <Tile name="store" fill="url(#asg)">
            <defs>
              <Grad id="asg" a="#2bb6f6" b="#1f62dd" />
            </defs>
            <g stroke="#fff" strokeWidth="5" strokeLinecap="round">
              <path d="M40 16L26 41M31 16l23 38M13 44h28M50 44h8M20 51l-2 4" />
            </g>
          </Tile>
        </DockItem>
        <DockItem label="System Preferences">
          <Tile name="set"><SettingsArt /></Tile>
          <span className={"absolute -right-[11px] -top-2 flex h-[34px] w-[34px] items-center justify-center rounded-full bg-[#ee3f3d] text-[19px] leading-6 text-white " + INTER}>2</span>
        </DockItem>
        <DockItem label="Google Chrome" running><Tile name="chrome" fill="#fbfbfb"><ChromeArt /></Tile></DockItem>
        <DockItem label="Terminal" running>
          <Tile name="term" fill="#b4c0c6">
            <rect x="3" y="3" width="65" height="65" rx="14" fill="#000" />
            <rect x="8" y="8" width="55" height="55" rx="9" fill="#242424" />
            <path d="M13 14l8 4.500-8 4.500M25 27h10" stroke="#fff" strokeWidth="2.200" fill="none" />
          </Tile>
        </DockItem>
        <DockItem label="Slack" running><SlackTile name="slack" /></DockItem>
        <DockItem label="Visual Studio Code" running><CodeTile name="code" /></DockItem>
      </div>

      <span className="ml-[31px] mr-7 h-[82px] w-0.5 bg-white/30" />

      <div className="flex items-center gap-4">
        <DockItem label="Postgres" className="h-[71px] justify-center" running>
          <svg viewBox="0 0 78 78" className="h-[78px] w-[78px]" aria-hidden="true"><ElephantArt /></svg>
        </DockItem>
        <DockItem label="Visual Studio Code"><CodeTile name="code2" /></DockItem>
        <DockItem label="Preview" className="ml-1.5">
          <svg viewBox="0 0 74 74" className="h-[74px] w-[74px]" aria-hidden="true">
            <defs>
              <Grad id="sky" a="#8fb6ea" b="#c3dcf5" />
              <clipPath id="pv"><rect x="6" y="6" width="59" height="59" rx="11" /></clipPath>
            </defs>
            <rect width="71" height="71" rx="16" fill="#f1eff1" />
            <g clipPath="url(#pv)">
              <rect x="6" y="6" width="59" height="34" fill="url(#sky)" />
              <rect x="6" y="39" width="59" height="10" fill="#264579" />
              <rect x="6" y="49" width="59" height="17" fill="#7da5bd" />
              <path d="M6 50l8-3 6 5 9-4 4 6-8 4-9-2-10 3zM18 62l7-4 8 7H16z" fill="#4d4239" />
              <path d="M6 57l9 2 9-5 8 5-5 4-12-1-9 4z" fill="#e8eff3" />
            </g>
            <path d="M39 50h26l8 19c0 6-42 6-42 0z" fill="#b4bcc3" fillOpacity=".92" stroke="#7e858b" />
            <path d="M45 54l6 4 8-3 1 8-8 3-8-3z" fill="#566b80" />
            <path d="M50 54l4 5-5 4z" fill="#e6ebef" />
            <path d="M36 67c8-4 24-4 32 0v3c-8 2-24 2-32 0z" fill="#f3f5f6" />
            <path d="M36 37c0-4 31-4 31 0v11c0 4-31 4-31 0z" fill="#111" />
            <ellipse cx="51.500" cy="37.500" rx="14" ry="2" fill="#3c3c3e" />
          </svg>
        </DockItem>
      </div>

      <span className="ml-[30px] mr-[29px] h-[82px] w-0.5 bg-white/30" />

      <div className="flex items-center">
        <DockItem label="Downloads"><CalendarStack /></DockItem>
        <DockItem label="Database window" className="ml-3.5">
          <svg viewBox="0 0 82 49" className="h-[49px] w-[82px]" aria-hidden="true">
            <rect width="82" height="49" fill="#222323" />
            <rect width="82" height="4" fill="#343536" />
            <rect x="37" y="1" width="33" height="2" fill="#6a6b6c" />
            <circle cx="2" cy="2" r=".9" fill="#ff5f57" />
            <circle cx="4" cy="2" r=".9" fill="#febc2e" />
            <circle cx="6" cy="2" r=".9" fill="#33c748" />
            {[6, 10, 13, 16, 19, 22, 25].map((y) => (
              <path key={y} d={`M4 ${y}h2M10 ${y}h3M17 ${y}h3`} stroke="#6a6b6c" strokeWidth="1" />
            ))}
            <path d="M0 48h15" stroke="#aaa" strokeWidth="1.500" strokeDasharray="5 1" />
          </svg>
          <svg viewBox="0 0 78 78" className="absolute -bottom-4 right-0 h-[29px] w-[29px]" aria-hidden="true"><ElephantArt /></svg>
        </DockItem>
        <DockItem label="Terminal window" className="ml-[7px]">
          <svg viewBox="0 0 88 58" className="h-[58px] w-[88px]" aria-hidden="true">
            <rect x="1" y="1" width="86" height="56" rx="3" fill="#0b0c0b" stroke="#ccdfe2" strokeWidth="2" />
            <rect x="5" y="4" width="78" height="50" fill="#1d1e1c" />
            {[6, 8, 10, 12, 14, 16, 18, 21, 23, 25, 27, 30, 32, 34, 36, 38, 40, 42, 45, 47, 49].map((y, i) => (
              <path
                key={y}
                d={`M6 ${y}h${i === 0 ? 26 : i === 5 ? 18 : i === 6 ? 76 : i % 4 === 2 ? 62 : 76}`}
                stroke={(i > 1 && i < 6) || i > 17 ? "#6f6d22" : "#8f8f8d"}
                strokeWidth=".9"
                strokeDasharray="4 .8 7 1 3 .7"
              />
            ))}
            <path d="M6 52h22" stroke="#6a55b5" strokeDasharray="4 1" />
          </svg>
        </DockItem>
        <DockItem label="Finder window" className="ml-[7px]">
          <FinderWindow
            files={[[20, 15, 6, 7], [33, 8, 6, 7], [47, 11, 6, 5, "#333"], [64, 8, 7, 5, "#333"], [38, 19, 7, 6, "#333"], [57, 20, 7, 3], [45, 27, 6, 8], [53, 30, 5, 6], [20, 34, 5, 2], [32, 34, 6, 2, "#333"]]}
          />
          <MiniFinder name="mf1" />
        </DockItem>
        <DockItem label="Slack window" className="ml-3">
          <svg viewBox="0 0 82 46" className="h-[46px] w-[82px]" aria-hidden="true">
            <rect width="82" height="46" fill="#16191c" />
            <rect width="16" height="46" fill="#0c0e10" />
            <rect x="22" y="1" width="38" height="1.500" fill="#3b3d40" />
            <circle cx="14.500" cy="4" r="1.500" fill="#eee" />
            <rect x="22" y="11" width="23" height="11" fill="#5b7168" />
            <path d="M30 11v11M37 11v11" stroke="#96694a" strokeWidth="2" />
            <rect y="28" width="16" height="2" fill="#2a7fc0" />
            {[4, 8, 11, 14, 17, 20, 24, 33, 36, 39, 42].map((y) => (
              <rect key={y} x="3" y={y} width="8" height="1" fill="#5b5d60" />
            ))}
            {[4, 7, 9, 25, 27, 31, 34].map((y) => (
              <rect key={y} x="19" y={y} width={y > 30 ? 44 : 18} height="1" fill="#4a5053" />
            ))}
          </svg>
          <span className="absolute -bottom-4 right-0.5 block h-[27px] w-[27px] [&>svg]:h-full [&>svg]:w-full"><SlackTile name="ms" /></span>
        </DockItem>
        <DockItem label="Project folder window" className="ml-2.5">
          <FinderWindow
            light
            files={[[20, 8, 6, 7], [32, 10, 8, 3], [45, 9, 8, 6, "#333"], [58, 10, 8, 3], [70, 10, 8, 3], [20, 23, 7, 3], [33, 21, 6, 8]]}
          />
          <MiniFinder name="mf2" />
        </DockItem>
        <DockItem label="Bin" className="ml-[18px]"><Trash /></DockItem>
      </div>
    </footer>
  );
}

function Wallpaper() {
  return (
    <svg
      viewBox="0 0 2560 1600"
      preserveAspectRatio="none"
      className="absolute inset-0 h-full w-full"
      aria-hidden="true"
    >
      <defs>
        <linearGradient id="w1" x1="0" x2="1" y1="0" y2="0">
          <stop offset="0" stopColor="#4a0b63" />
          <stop offset=".35" stopColor="#4c0f64" />
          <stop offset=".7" stopColor="#1d0a42" />
          <stop offset="1" stopColor="#180736" />
        </linearGradient>
        <linearGradient id="w2" x1="0" x2="1" y1="0" y2="0">
          <stop offset="0" stopColor="#0b0120" />
          <stop offset=".5" stopColor="#0c0222" />
          <stop offset="1" stopColor="#150742" />
        </linearGradient>
        <linearGradient id="w3" x1="0" x2="0" y1="0" y2="1">
          <stop offset="0" stopColor="#000" stopOpacity=".5" />
          <stop offset="1" stopColor="#000" stopOpacity="0" />
        </linearGradient>
      </defs>
      <rect width="2560" height="200" fill="#35127f" />
      <rect y="1400" width="2560" height="200" fill="url(#w2)" />
      <path d="M1380 1400L1457 1454 1665 1600H2560V1400z" fill="url(#w1)" />
      <path d="M0 1454h2560v60H0z" fill="url(#w3)" />
    </svg>
  );
}

export default function App() {
  return (
    <div className="relative flex min-h-screen flex-col overflow-hidden bg-[#0b0120]">
      <Wallpaper />
      <MenuBar />
      <div className="relative flex flex-1 flex-col overflow-hidden rounded-[20px] border border-t-2 border-[#6c6d70] border-b-[#7ea3ba]">
        <div className={"text-[24px] leading-8 " + INTER}>
          <TabStrip />
          <Toolbar />
          <BookmarksBar />
        </div>
        <Page />
      </div>
      <Dock />
    </div>
  );
}
